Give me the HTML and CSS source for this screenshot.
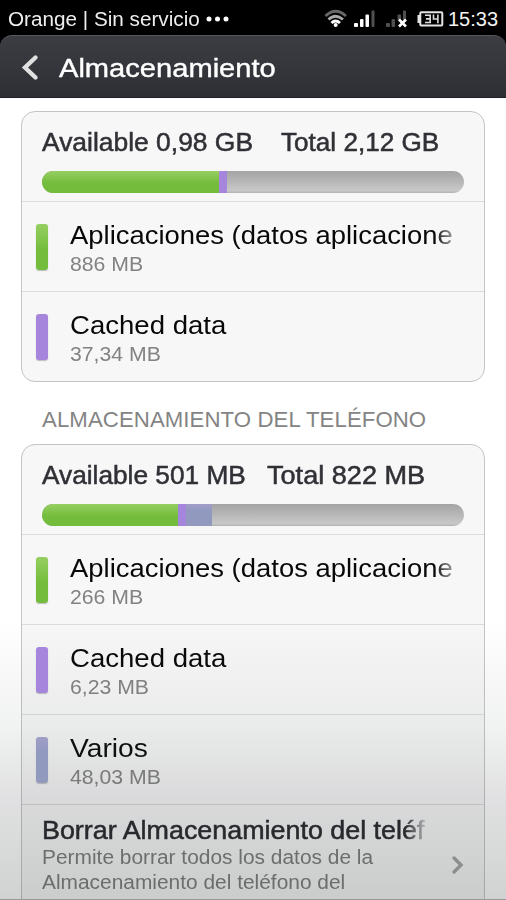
FILE: index.html
```
<!DOCTYPE html>
<html lang="es">
<head>
<meta charset="utf-8">
<title>Almacenamiento</title>
<link rel="stylesheet" href="styles.css">
</head>
<body>
<div class="screen">
  <header class="status">
    <span class="carrier">Orange | Sin servicio</span>
    <svg class="dots" width="24" height="6" viewBox="0 0 24 6" fill="#fff"><circle cx="3" cy="3" r="2.5"/><circle cx="11.5" cy="3" r="2.5"/><circle cx="20" cy="3" r="2.5"/></svg>
    <svg class="icons" width="120" height="22" viewBox="324 8 120 22">
      <g fill="none" stroke-width="2.8">
        <path d="M325.500 16Q335.500 6.500 346 16" stroke="#686868"/>
        <path d="M328.500 19.500Q335.500 13 343 19.500" stroke="#aaa"/>
        <path d="M331.500 23Q335.500 19 340 23" stroke="#fff"/>
      </g>
      <circle cx="335.700" cy="25" r="2" fill="#fff"/>
      <g fill="#fff"><rect x="354" y="23" width="4" height="4" rx="1"/><rect x="360" y="19" width="3.500" height="8" rx="1"/><rect x="365.500" y="14.500" width="3.500" height="12.500" rx="1"/></g>
      <rect x="371.500" y="10.500" width="3" height="16.500" rx="1" fill="#505050"/>
      <g fill="#505050"><rect x="386" y="23" width="4" height="4" rx="1"/><rect x="391.500" y="19" width="3.500" height="8" rx="1"/><rect x="397.500" y="14.500" width="3.500" height="6" rx="1"/><rect x="403" y="10.500" width="3" height="10" rx="1"/></g>
      <path d="M399 19.500l7 7M406 19.500l-7 7" stroke="#fff" stroke-width="2.600"/>
      <rect x="420.300" y="12.300" width="22" height="13.200" rx="1" fill="none" stroke="#e4e4e4" stroke-width="2"/>
      <rect x="417.500" y="15" width="3" height="8" fill="#e4e4e4"/>
      <path d="M425 15.300h5.200v7.200H425M426 18.900h4.200M433.500 14.500v4.500h5M437.900 14.500v8.800" fill="none" stroke="#ddd" stroke-width="1.600"/>
    </svg>
    <span class="time">15:33</span>
  </header>
  <div class="titlebar">
    <svg width="20" height="28" viewBox="0 0 20 28"><path d="M16.500 3.500L6 13.500L16.500 23.500" fill="none" stroke="#e0e0e0" stroke-width="4.400" stroke-linecap="round" stroke-linejoin="miter"/></svg>
    <h1>Almacenamiento</h1>
  </div>
  <main>
    <section class="card">
      <div class="summary">
        <div class="totals"><span class="avail">Available 0,98 GB</span><span class="total-gb">Total 2,12 GB</span></div>
        <div class="bar"><i class="green" style="width:177px"></i><i class="purple"></i></div>
      </div>
      <div class="row"><i class="chip green"></i><div class="info"><div class="name long">Aplicaciones (datos aplicacione</div><div class="size">886 MB</div></div></div>
      <div class="row"><i class="chip purple"></i><div class="info"><div class="name">Cached data</div><div class="size">37,34 MB</div></div></div>
    </section>
    <h2>ALMACENAMIENTO DEL TELÉFONO</h2>
    <section class="card">
      <div class="summary">
        <div class="totals"><span class="avail mb">Available 501 MB</span><span class="total-mb">Total 822 MB</span></div>
        <div class="bar"><i class="green" style="width:136px"></i><i class="purple"></i><i class="blue" style="width:26px"></i></div>
      </div>
      <div class="row"><i class="chip green"></i><div class="info"><div class="name long">Aplicaciones (datos aplicacione</div><div class="size">266 MB</div></div></div>
      <div class="row"><i class="chip purple"></i><div class="info"><div class="name">Cached data</div><div class="size">6,23 MB</div></div></div>
      <div class="row"><i class="chip blue"></i><div class="info"><div class="name wide">Varios</div><div class="size">48,03 MB</div></div></div>
      <div class="erase">
        <div class="erase-text">
          <div class="erase-title">Borrar Almacenamiento del teléf</div>
          <div class="desc">Permite borrar todos los datos de la<br>Almacenamiento del teléfono del<br>teléfono, como la música o las fotos</div>
        </div>
        <svg width="14" height="20" viewBox="0 0 14 20"><path d="M3 3l7 7-7 7" fill="none" stroke="#a0a0a0" stroke-width="3.400" stroke-linecap="round"/></svg>
      </div>
    </section>
  </main>
  <div class="shade"></div>
</div>
</body>
</html>
```

FILE: styles.css
```
* { box-sizing: border-box; }
html, body { margin: 0; background: #000; }
.screen {
  position: relative;
  width: 506px;
  height: 900px;
  overflow: hidden;
  background: #000;
  font-family: "Liberation Sans", Arial, sans-serif;
  white-space: nowrap;
}
.status {
  height: 35px;
  display: flex;
  align-items: center;
  padding: 3px 8px 0;
  color: #eee;
  font-size: 20px;
}
.carrier, .time, h1, .totals span, .name, .size, .erase-title, .desc { transform-origin: 0 50%; }
.carrier { width: 198px; transform: scaleX(1.035); }
.dots { margin-bottom: 1px; }
.icons { margin-left: 94px; }
.time { margin-left: 4px; color: #f4f4f4; }
.titlebar {
  height: 63px;
  display: flex;
  align-items: center;
  padding: 3px 0 0 19px;
  border-top: 1px solid #55575a;
  border-bottom: 1px solid #1f2024;
  border-radius: 12px 12px 0 0;
  background: linear-gradient(#3b3d43, #2e2f35);
}
h1 {
  margin: 0 0 0 20px;
  color: #fff;
  font-size: 26.500px;
  font-weight: 400;
  transform: scaleX(1.098);
  -webkit-text-stroke: .4px #fff;
}
main { height: 802px; padding: 13px 21px 0; background: #fff; }
.card {
  border: 1px solid #c4c4c4;
  border-radius: 14px;
  background: #f7f7f7;
}
.summary { height: 89px; padding: 15px 20px 0; }
.totals {
  display: flex;
  height: 44px;
  line-height: 30px;
  color: #303136;
  font-size: 25px;
  -webkit-text-stroke: .5px currentColor;
}
.avail { width: 239px; transform: scaleX(1.057); }
.avail.mb { width: 225px; transform: scaleX(1.05); }
.total-gb { transform: scaleX(1.044); }
.total-mb { transform: scaleX(1.084); }
.bar {
  display: flex;
  width: 422px;
  height: 22px;
  overflow: hidden;
  border-radius: 11px;
  background: linear-gradient(#a4a4a4, #c8c8c8 90%, #b0b0b0);
}
.bar .purple { width: 8px; }
.green { background: linear-gradient(#96cf62, #74bd3c 55%); }
.purple { background: #a586dc; }
.blue { background: linear-gradient(#a19ec8, #9199c0 30%, #9199bd); }
.row {
  height: 90px;
  display: flex;
  border-top: 1px solid #dcdcdc;
  padding: 22px 0 0 14px;
}
.chip {
  position: relative;
  z-index: 1;
  width: 12px;
  height: 46px;
  border-radius: 3px;
  box-shadow: 0 1px 1px #8888;
}
.info { width: 390px; margin: -4px 0 0 22px; }
.name {
  width: 366px;
  color: #080808;
  font-size: 26px;
  line-height: 31px;
  transform: scaleX(1.06);
}
.name.wide { transform: scaleX(1.085); }
.name.long {
  transform: scaleX(1.055);
  mask-image: linear-gradient(90deg, #000 345px, transparent 374px);
}
.size { color: #828282; font-size: 20.500px; line-height: 25px; transform: scaleX(1.035); }
h2 {
  height: 62px;
  margin: 0;
  padding-left: 21px;
  color: #848484;
  font-size: 22.200px;
  font-weight: 400;
  letter-spacing: .09px;
  line-height: 76px;
}
.erase {
  height: 130px;
  display: flex;
  border-top: 1px solid #d8d8d8;
  padding: 10px 0 0 20px;
}
.erase-text { width: 409px; }
.erase-title {
  width: 362px;
  color: #202126;
  font-size: 25px;
  line-height: 30px;
  transform: scaleX(1.075);
  -webkit-text-stroke: .5px currentColor;
  mask-image: linear-gradient(90deg, #000 338px, transparent 361px);
}
.desc { color: #777; font-size: 20px; line-height: 25px; transform: scaleX(1.045); }
.erase svg { margin-top: 40px; }
.shade {
  position: absolute;
  inset: 620px 0 0;
  background: linear-gradient(rgba(80,90,88,0), rgba(80,90,88,.08) 38%, rgba(70,72,80,.165) 63%, rgba(70,76,72,.25));
  border-bottom: 1px solid #999;
}
```
